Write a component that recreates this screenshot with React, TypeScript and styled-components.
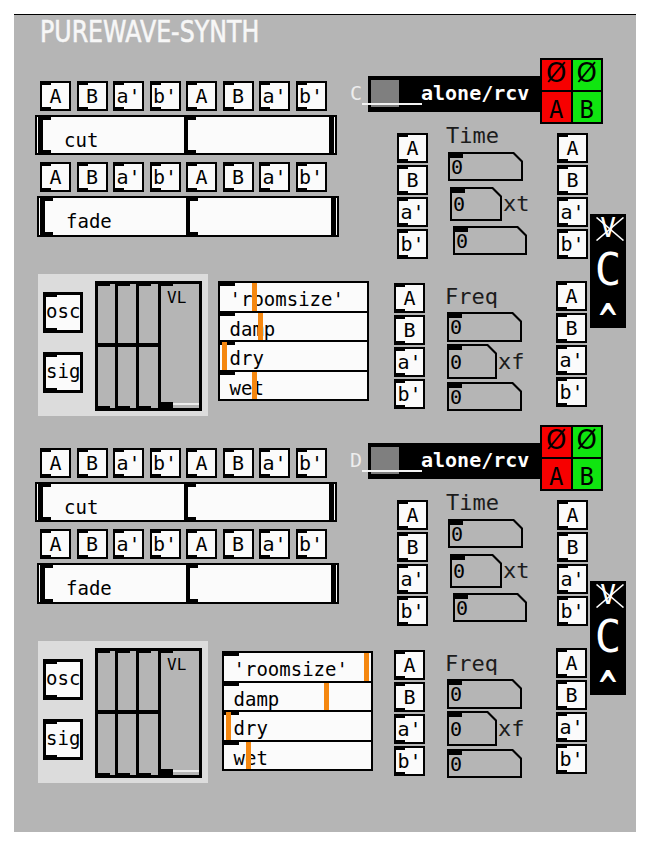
import React from "react";
import styled, { createGlobalStyle } from "styled-components";

const MONO = `"DejaVu Sans Mono", "Liberation Mono", monospace`;
const SANS = `"DejaVu Sans", "Liberation Sans", sans-serif`;
const CANVAS = "#b5b5b5";
const PAPER = "#fbfbfb";
const ORANGE = "#f5870f";
const RED = "#f70000";
const GREEN = "#10e510";

const GlobalStyle = createGlobalStyle`
  html, body { margin: 0; padding: 0; background: #ffffff; }
  body { font-family: ${MONO}; color: #000; }
  * { box-sizing: border-box; }
`;

const Canvas = styled.div`
  margin: 14px 0 0 14px;
  width: 622px;
  height: 818px;
  background: ${CANVAS};
  border-top: 1px solid #000;
  overflow: hidden;
`;

const Title = styled.div`
  margin: 2px 0 0 26px;
  height: 30px;
  font-family: ${SANS};
  font-size: 30px;
  line-height: 30px;
  color: #f7f7f7;
  -webkit-text-stroke: 0.6px #f7f7f7;
  white-space: nowrap;
  transform: scaleX(0.79);
  transform-origin: left center;
`;

const SectionWrap = styled.section<{ $mt: number }>`
  display: flex;
  align-items: flex-start;
  height: 367px;
  margin-top: ${(p) => p.$mt}px;
  padding-left: 21px;
`;

/* ---------- left column ---------- */
const LeftCol = styled.div`
  width: 304px;
  padding-top: 23px;
  display: flex;
  flex-direction: column;
  align-items: flex-start;
`;

const BtnRow = styled.div<{ $mt: number }>`
  display: flex;
  gap: 5.5px;
  margin: ${(p) => p.$mt}px 0 0 5px;
`;

const Msg = styled.div`
  position: relative;
  width: 31px;
  height: 30px;
  border: 2px solid #000;
  background: ${PAPER};
  display: flex;
  align-items: center;
  justify-content: center;
  font-family: ${MONO};
  font-size: 20px;
  line-height: 20px;
  padding-bottom: 1px;
  &::before {
    content: "";
    position: absolute;
    left: -2px;
    top: -2px;
    width: 11px;
    height: 4px;
    background: #000;
  }
  &::after {
    content: "";
    position: absolute;
    left: -2px;
    bottom: -2px;
    width: 11px;
    height: 4px;
    background: #000;
  }
`;

const Bar = styled.div<{ $ml: number; $mt: number; $h: number }>`
  display: flex;
  width: 302px;
  height: ${(p) => p.$h}px;
  margin: ${(p) => p.$mt}px 0 0 ${(p) => p.$ml}px;
  border: 2px solid #000;
  background: ${PAPER};
`;

const Knob = styled.div<{ $side: "left" | "right" }>`
  width: 5px;
  background: #000;
  margin-left: ${(p) => (p.$side === "left" ? "1px" : "0")};
  margin-right: ${(p) => (p.$side === "right" ? "1px" : "0")};
`;

const BarHalf = styled.div`
  flex: 1;
  position: relative;
  display: flex;
  align-items: center;
  padding: 10px 0 0 21px;
  font-family: ${MONO};
  font-size: 19px;
  line-height: 19px;
  &::before {
    content: "";
    position: absolute;
    left: 0;
    top: 0;
    width: 8px;
    height: 3px;
    background: #000;
  }
  &::after {
    content: "";
    position: absolute;
    left: 0;
    bottom: 0;
    width: 8px;
    height: 3px;
    background: #000;
  }
`;

const BarDivider = styled.div`
  width: 4px;
  background: #000;
`;

const ReverbRow = styled.div`
  display: flex;
  align-items: flex-start;
  margin: 37px 0 0 3px;
`;

const Panel = styled.div`
  width: 170px;
  height: 142px;
  background: #dcdcdc;
  display: flex;
  align-items: flex-start;
  padding: 7px 0 0 5px;
`;

const IOCol = styled.div`
  display: flex;
  flex-direction: column;
  gap: 19px;
  margin-top: 11px;
`;

const IOBox = styled.div`
  position: relative;
  width: 40px;
  height: 41px;
  border: 3px solid #000;
  background: ${PAPER};
  display: flex;
  align-items: center;
  font-family: ${MONO};
  font-size: 19px;
  line-height: 19px;
  padding-bottom: 2px;
  white-space: nowrap;
  &::before {
    content: "";
    position: absolute;
    left: -3px;
    top: -3px;
    width: 14px;
    height: 5px;
    background: #000;
  }
  &::after {
    content: "";
    position: absolute;
    left: -3px;
    bottom: -3px;
    width: 14px;
    height: 5px;
    background: #000;
  }
`;

const Sliders = styled.div`
  display: flex;
  margin-left: 12px;
  height: 130px;
  border: 3px solid #000;
  border-right: none;
`;

const VSlider = styled.div<{ $w: number }>`
  position: relative;
  width: ${(p) => p.$w}px;
  border-right: 3px solid #000;
  background: ${CANVAS};
  display: flex;
  flex-direction: column;
  &::before {
    content: "";
    position: absolute;
    left: 0;
    top: 0;
    width: 12px;
    height: 2px;
    background: #000;
  }
  &::after {
    content: "";
    position: absolute;
    left: 0;
    bottom: 0;
    width: 12px;
    height: 2px;
    background: #000;
  }
`;

const HKnob = styled.div<{ $mt: number }>`
  height: 4px;
  margin-top: ${(p) => p.$mt}px;
  background: #000;
`;

const VLLabel = styled.div`
  margin: 6px 0 0 6px;
  font-family: ${MONO};
  font-size: 16px;
  line-height: 16px;
`;

const VLKnob = styled.div`
  margin-top: auto;
  margin-bottom: 2px;
  height: 4px;
  background: linear-gradient(#000, #000) left / 12px 100% no-repeat,
    linear-gradient(#ececec, #ececec) right center / calc(100% - 12px) 2px no-repeat;
`;

const RoomBox = styled.div<{ $ml: number; $mt: number }>`
  width: 151px;
  margin: ${(p) => p.$mt}px 0 0 ${(p) => p.$ml}px;
  border: 2px solid #000;
  background: #000;
  display: flex;
  flex-direction: column;
  gap: 2px;
`;

const RoomRow = styled.div`
  position: relative;
  height: 27.5px;
  background: ${PAPER};
  padding: 5px 0 0 9.5px;
  font-family: ${MONO};
  font-size: 19px;
  line-height: 22px;
  white-space: pre;
  &::before {
    content: "";
    position: absolute;
    left: 0;
    top: 0;
    width: 15px;
    height: 3px;
    background: #000;
  }
`;

const Marker = styled.div`
  position: absolute;
  top: 0;
  bottom: 0;
  width: 5px;
  background: ${ORANGE};
`;

/* ---------- right column ---------- */
const RightCol = styled.div`
  width: 276px;
  margin-left: 11px;
  display: flex;
  flex-direction: column;
`;

const Header = styled.div`
  display: flex;
  align-items: flex-start;
  height: 66px;
`;

const RcvWrap = styled.div`
  position: relative;
  display: flex;
  align-items: center;
  margin-top: 18px;
`;

const RcvLetter = styled.span`
  width: 18px;
  color: #ededed;
  font-family: ${MONO};
  font-size: 20px;
  line-height: 20px;
  margin-top: -3px;
`;

const RcvBar = styled.div`
  width: 173px;
  height: 36px;
  background: #000;
  display: flex;
  align-items: center;
  padding-left: 3px;
`;

const GrayBlock = styled.div`
  width: 28px;
  height: 27px;
  align-self: flex-start;
  margin-top: 4px;
  background: #7f7f7f;
`;

const RcvText = styled.span`
  margin-left: 22px;
  color: #fff;
  font-family: ${MONO};
  font-weight: bold;
  font-size: 20px;
  line-height: 20px;
  margin-top: -3px;
  white-space: nowrap;
`;

const Underline = styled.div`
  position: absolute;
  left: 12px;
  top: 27px;
  width: 60px;
  height: 1.5px;
  background: #f2f2f2;
`;

const ABGrid = styled.div`
  width: 63px;
  height: 66px;
  margin-left: -1px;
  padding: 2px;
  gap: 2px;
  background: #000;
  display: grid;
  grid-template-columns: 1fr 1fr;
  grid-template-rows: 1fr 1fr;
`;

const Cell = styled.div<{ $bg: string; $big?: boolean }>`
  background: ${(p) => p.$bg};
  display: flex;
  justify-content: center;
  align-items: flex-start;
  color: #000;
  font-family: ${(p) => (p.$big ? SANS : MONO)};
  font-size: ${(p) => (p.$big ? 26 : 24)}px;
  line-height: ${(p) => (p.$big ? 26 : 24)}px;
  padding-top: ${(p) => (p.$big ? 0 : 6)}px;
`;

const Body = styled.div`
  display: flex;
  align-items: flex-start;
`;

const Groups = styled.div`
  display: flex;
  flex-direction: column;
`;

const Group = styled.div<{ $mt: number }>`
  display: flex;
  align-items: flex-start;
  margin-top: ${(p) => p.$mt}px;
`;

const BoxCol = styled.div<{ $mt: number; $ml: number }>`
  display: flex;
  flex-direction: column;
  gap: 2px;
  margin: ${(p) => p.$mt}px 0 0 ${(p) => p.$ml}px;
`;

const Middle = styled.div<{ $w: number }>`
  width: ${(p) => p.$w}px;
  display: flex;
  flex-direction: column;
  align-items: flex-start;
`;

const GroupLabel = styled.div<{ $mt: number; $ml: number }>`
  margin: ${(p) => p.$mt}px 0 0 ${(p) => p.$ml}px;
  font-family: ${MONO};
  font-size: 22px;
  line-height: 22px;
  color: #1c1c1c;
`;

const NumLine = styled.div<{ $mt: number; $ml: number }>`
  display: flex;
  align-items: center;
  margin: ${(p) => p.$mt}px 0 0 ${(p) => p.$ml}px;
`;

const NumOuter = styled.div<{ $w: number; $h: number }>`
  width: ${(p) => p.$w}px;
  height: ${(p) => p.$h}px;
  padding: 2px;
  background: #000;
  clip-path: polygon(0 0, calc(100% - 9px) 0, 100% 9px, 100% 100%, 0 100%);
`;

const NumInner = styled.div`
  position: relative;
  height: 100%;
  background: ${CANVAS};
  clip-path: polygon(0 0, calc(100% - 8px) 0, 100% 8px, 100% 100%, 0 100%);
  display: flex;
  align-items: center;
  padding-left: 1px;
  font-family: ${MONO};
  font-size: 20px;
  line-height: 20px;
  &::before {
    content: "";
    position: absolute;
    left: 0;
    top: 0;
    width: 13px;
    height: 4px;
    background: #000;
  }
`;

const Suffix = styled.span`
  font-family: ${MONO};
  font-size: 22px;
  line-height: 22px;
  color: #1c1c1c;
  margin-left: 1px;
`;

const VBox = styled.div`
  margin: 90px 0 0 2px;
  width: 36px;
  height: 114px;
  background: #000;
  display: flex;
  flex-direction: column;
  align-items: center;
  color: #fff;
  font-family: ${MONO};
`;

const VMark = styled.div`
  position: relative;
  height: 28px;
  font-size: 26px;
  line-height: 28px;
`;

const XOverlay = styled.svg`
  position: absolute;
  left: -4px;
  top: 3px;
`;

const BigC = styled.div`
  margin-top: 10px;
  height: 36px;
  font-size: 44px;
  line-height: 36px;
`;

const Caret = styled.div`
  margin-top: 10px;
  height: 26px;
  font-family: ${SANS};
  font-weight: bold;
  font-size: 26px;
  line-height: 26px;
  transform: scaleY(1.7);
  transform-origin: center top;
`;

/* ---------- data ---------- */
type NumCfg = { w: number; h: number; ml: number; mt: number; suffix?: string };
type GroupCfg = {
  mt: number;
  label: string;
  labelMt: number;
  labelMl: number;
  leftMl: number;
  leftMt: number;
  rightMt: number;
  midW: number;
  nums: NumCfg[];
};

const GROUPS: GroupCfg[] = [
  {
    mt: 0,
    label: "Time",
    labelMt: 0.5,
    labelMl: 18,
    leftMl: 47,
    leftMt: 9,
    rightMt: 9,
    midW: 129,
    nums: [
      { w: 75, h: 29, ml: 20, mt: 5.5 },
      { w: 52, h: 34, ml: 22, mt: 6, suffix: "xt" },
      { w: 74, h: 29, ml: 25, mt: 5 },
    ],
  },
  {
    mt: 22,
    label: "Freq",
    labelMt: 4.5,
    labelMl: 20,
    leftMl: 44,
    leftMt: 2,
    rightMt: 0,
    midW: 131,
    nums: [
      { w: 75, h: 30, ml: 22, mt: 4.5 },
      { w: 50, h: 35, ml: 22, mt: 2, suffix: "xf" },
      { w: 75, h: 29, ml: 22, mt: 3 },
    ],
  },
];

type SectionCfg = {
  mt: number;
  letter: string;
  room: { ml: number; mt: number };
  values: number[];
};

const SECTIONS: SectionCfg[] = [
  { mt: 11, letter: "C", room: { ml: 10, mt: 7 }, values: [32, 38, 2, 32] },
  { mt: 0, letter: "D", room: { ml: 14, mt: 10 }, values: [140, 100, 2, 22] },
];

const LABELS = ["A", "B", "a'", "b'"];
const ROOM_ROWS = ["'roomsize'", "damp", "dry", "wet"];

function BoxColumn({ mt, ml }: { mt: number; ml: number }) {
  return (
    <BoxCol $mt={mt} $ml={ml}>
      {LABELS.map((t) => (
        <Msg key={t}>{t}</Msg>
      ))}
    </BoxCol>
  );
}

function ControlGroup({ g }: { g: GroupCfg }) {
  return (
    <Group $mt={g.mt}>
      <BoxColumn mt={g.leftMt} ml={g.leftMl} />
      <Middle $w={g.midW}>
        <GroupLabel $mt={g.labelMt} $ml={g.labelMl}>
          {g.label}
        </GroupLabel>
        {g.nums.map((n, i) => (
          <NumLine key={i} $mt={n.mt} $ml={n.ml}>
            <NumOuter $w={n.w} $h={n.h}>
              <NumInner>0</NumInner>
            </NumOuter>
            {n.suffix && <Suffix>{n.suffix}</Suffix>}
          </NumLine>
        ))}
      </Middle>
      <BoxColumn mt={g.rightMt} ml={0} />
    </Group>
  );
}

function Section({ cfg }: { cfg: SectionCfg }) {
  const row = [...LABELS, ...LABELS];
  return (
    <SectionWrap $mt={cfg.mt}>
      <LeftCol>
        <BtnRow $mt={0}>
          {row.map((t, i) => (
            <Msg key={i}>{t}</Msg>
          ))}
        </BtnRow>
        <Bar $ml={0} $mt={4} $h={40}>
          <Knob $side="left" />
          <BarHalf>cut</BarHalf>
          <BarDivider />
          <BarHalf />
          <Knob $side="right" />
        </Bar>
        <BtnRow $mt={7}>
          {row.map((t, i) => (
            <Msg key={i}>{t}</Msg>
          ))}
        </BtnRow>
        <Bar $ml={2} $mt={4} $h={41}>
          <Knob $side="left" />
          <BarHalf>fade</BarHalf>
          <BarDivider />
          <BarHalf />
          <Knob $side="right" />
        </Bar>
        <ReverbRow>
          <Panel>
            <IOCol>
              <IOBox>osc</IOBox>
              <IOBox>sig</IOBox>
            </IOCol>
            <Sliders>
              <VSlider $w={20}>
                <HKnob $mt={59} />
              </VSlider>
              <VSlider $w={21}>
                <HKnob $mt={59} />
              </VSlider>
              <VSlider $w={22}>
                <HKnob $mt={59} />
              </VSlider>
              <VSlider $w={41}>
                <VLLabel>VL</VLLabel>
                <VLKnob />
              </VSlider>
            </Sliders>
          </Panel>
          <RoomBox $ml={cfg.room.ml} $mt={cfg.room.mt}>
            {ROOM_ROWS.map((t, i) => (
              <RoomRow key={t}>
                {t}
                <Marker style={{ left: cfg.values[i] }} />
              </RoomRow>
            ))}
          </RoomBox>
        </ReverbRow>
      </LeftCol>

      <RightCol>
        <Header>
          <RcvWrap>
            <RcvLetter>{cfg.letter}</RcvLetter>
            <RcvBar>
              <GrayBlock />
              <RcvText>alone/rcv</RcvText>
            </RcvBar>
            <Underline />
          </RcvWrap>
          <ABGrid>
            <Cell $bg={RED} $big>
              Ø
            </Cell>
            <Cell $bg={GREEN} $big>
              Ø
            </Cell>
            <Cell $bg={RED}>A</Cell>
            <Cell $bg={GREEN}>B</Cell>
          </ABGrid>
        </Header>
        <Body>
          <Groups>
            {GROUPS.map((g) => (
              <ControlGroup key={g.label} g={g} />
            ))}
          </Groups>
          <VBox>
            <VMark>
              V
              <XOverlay width="28" height="24" viewBox="0 0 28 24">
                <line x1="0.5" y1="0.5" x2="27.5" y2="23.5" stroke="#fff" strokeWidth="1.6" />
                <line x1="27.5" y1="0.5" x2="0.5" y2="23.5" stroke="#fff" strokeWidth="1.6" />
              </XOverlay>
            </VMark>
            <BigC>C</BigC>
            <Caret>^</Caret>
          </VBox>
        </Body>
      </RightCol>
    </SectionWrap>
  );
}

export default function App() {
  return (
    <>
      <GlobalStyle />
      <Canvas>
        <Title>PUREWAVE-SYNTH</Title>
        {SECTIONS.map((s) => (
          <Section key={s.letter} cfg={s} />
        ))}
      </Canvas>
    </>
  );
}
